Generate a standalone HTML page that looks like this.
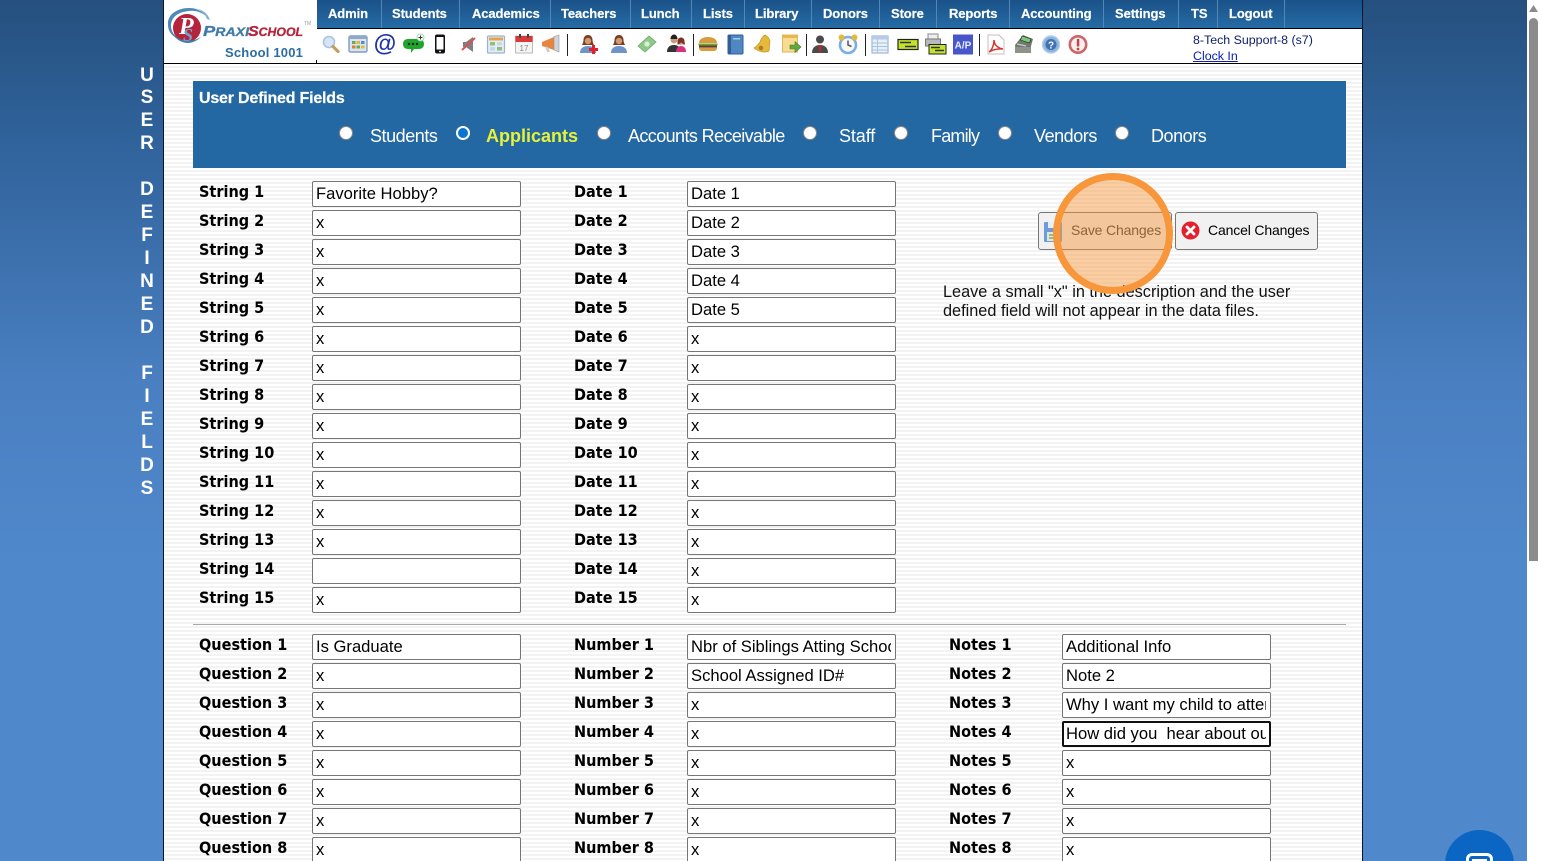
<!DOCTYPE html>
<html><head><meta charset="utf-8"><title>User Defined Fields</title>
<style>
*{box-sizing:border-box}
html,body{margin:0;padding:0;width:1541px;height:861px;overflow:hidden;background:#fff}
body{position:relative;font-family:"Liberation Sans",sans-serif}
#bg{position:absolute;left:0;top:0;width:1527px;height:861px;background:linear-gradient(180deg,#25507e 0,#2f6199 15%,#4a80c2 45%,#4f88cb 65%,#4f88cb 100%)}
#main{position:absolute;left:163px;top:0;width:1200px;height:861px;border-left:1px solid #0b1730;border-right:1px solid #0b1730;background:repeating-linear-gradient(180deg,#fff 0,#fff 2px,#f3f3f3 2px,#f3f3f3 4px)}
#head{position:absolute;left:164px;top:0;width:1198px;height:64px;background:#fff;border-bottom:1px solid #000}
#nav{position:absolute;left:317px;top:0;width:1045px;height:29px;background:linear-gradient(180deg,#1a5288,#266ba6);border-bottom:1px solid #000}
#nav a{position:absolute;top:6px;color:#fff;font-weight:bold;font-size:13px;line-height:15px;text-decoration:none;letter-spacing:-.1px;-webkit-text-stroke:.2px #fff}
#nav i{position:absolute;top:0;width:1px;height:28px;background:#5288b8}
.ic{position:absolute;top:32px;width:24px;height:24px}
.sp{position:absolute;top:34px;width:1px;height:22px;background:#222}
#side{position:absolute;left:134px;top:64.500px;width:26px;color:#fff;font-weight:bold;font-size:19px;line-height:22.980px;text-align:center}
#panel{position:absolute;left:193px;top:81px;width:1153px;height:87px;background:#2368a3}
#panel b{position:absolute;left:6px;top:9px;color:#fff;font-size:16px;line-height:18px;letter-spacing:-.2px;-webkit-text-stroke:.2px #fff}
.rd{position:absolute;top:126px;width:14px;height:14px;border-radius:50%;background:#fff;border:1px solid #888}
.rd.on{background:#0a75d0;border:2px solid #fff}
.rl{position:absolute;top:125.500px;color:#fff;font-size:18px;line-height:21px;letter-spacing:-.45px}
.rl.on{color:#e6f23a;font-weight:bold;letter-spacing:0}
.col{position:absolute}
.r{position:relative;height:29px;width:340px}
.r b{position:absolute;left:0;top:1px;font:bold 16px/19px "DejaVu Sans",sans-serif;color:#000;white-space:nowrap;transform:scaleX(.905);transform-origin:0 50%}
.r input{position:absolute;left:113px;top:0;width:209px;height:26px;border:1px solid #767676;border-radius:2px;background:#fff;padding:0 4px 0 3px;font:16.6px "Liberation Sans",sans-serif;color:#000;outline:none;margin:0}
.r input.f{border:2px solid #101010;padding:0 3px 0 2px}
.btn{position:absolute;top:212px;height:38px;background:#f1f1f1;border:1px solid #767676;border-radius:3px;font-size:14px;line-height:34px;letter-spacing:-.15px;color:#000}
#note{position:absolute;left:943px;top:283px;font-size:16.3px;line-height:19px;color:#111;white-space:nowrap}
#hr{position:absolute;left:193px;top:624px;width:1153px;height:1px;background:#a8a8a8}
#circle{position:absolute;left:1053px;top:173px;width:120px;height:121px;border-radius:50%;border:7px solid #f7963a;background:rgba(246,150,60,.48)}
#who{position:absolute;left:1193px;top:32px;font-size:12.400px;line-height:16px;color:#10206a;white-space:nowrap}
#who u{color:#0a20b0}
#track{position:absolute;left:1527px;top:0;width:14px;height:861px;background:#fff}
#thumb{position:absolute;left:1529px;top:18px;width:9px;height:543px;background:#8b8b8b;border-radius:5px 5px 0 0}
#chat{position:absolute;left:1445px;top:830px;width:69px;height:69px;border-radius:50%;background:#0a66c2}
#chat i{position:absolute;left:21px;top:23px;width:27px;height:22px;border:3px solid #fff;border-radius:6px}
#chat s{position:absolute;left:27px;top:29px;width:15px;height:2px;background:#fff}
</style></head><body>
<div id="bg"></div>
<div id="main"></div>
<div id="side">U<br>S<br>E<br>R<br>&nbsp;<br>D<br>E<br>F<br>I<br>N<br>E<br>D<br>&nbsp;<br>F<br>I<br>E<br>L<br>D<br>S</div>

<div id="head"></div>
<svg style="position:absolute;left:165px;top:3px" width="150" height="44" viewBox="0 0 150 44">
<path d="M3 22C2 11 13 5 24 5c8 0 13 3 17 8-5-4-11-6-17-5C13 9 6 14 6 23c0 6 4 10 8 13C8 34 3 29 3 22z" fill="#4c8bb8"/>
<path d="M33 6c5 1 10 5 12 11l-3-1c-2-5-5-8-9-10z" fill="#7fb0d0"/>
<circle cx="22" cy="25" r="14" fill="#b5243c"/>
<path d="M7 30c4 7 10 10 16 10 5 0 10-3 13-6-5 3-10 4-15 4-6-1-10-4-14-8z" fill="#3f7fb0"/>
<text x="14" y="31" font-family="Liberation Serif,serif" font-style="italic" font-weight="bold" font-size="24" fill="#fff">P</text>
<text x="18" y="38" font-family="Liberation Serif,serif" font-style="italic" font-weight="bold" font-size="18" fill="#6fa4cc">S</text>
<text x="38" y="33" font-family="Liberation Sans,sans-serif" font-style="italic" font-weight="bold" font-size="15" fill="#3f7cab" stroke="#3f7cab" stroke-width=".3" textLength="46" lengthAdjust="spacingAndGlyphs">P<tspan font-size="11.5">RAXI</tspan></text>
<text x="83" y="33" font-family="Liberation Sans,sans-serif" font-style="italic" font-weight="bold" font-size="15" fill="#b5243c" stroke="#b5243c" stroke-width=".3" textLength="55" lengthAdjust="spacingAndGlyphs">S<tspan font-size="11.5">CHOOL</tspan></text>
<text x="139" y="22" font-family="Liberation Sans,sans-serif" font-size="5" fill="#999">TM</text>
</svg>
<div style="position:absolute;left:225px;top:45px;font:bold 13px/15px 'Liberation Sans',sans-serif;letter-spacing:.2px;color:#2b6ea3;white-space:nowrap">School 1001</div>
<div style="position:absolute;left:316px;top:60px;width:1px;height:4px;background:#000"></div>

<div id="nav">
<a style="left:11px">Admin</a><i style="left:64px"></i>
<a style="left:75px">Students</a><i style="left:142px"></i>
<a style="left:155px">Academics</a><i style="left:233px"></i>
<a style="left:244px">Teachers</a><i style="left:313px"></i>
<a style="left:324px">Lunch</a><i style="left:374px"></i>
<a style="left:386px">Lists</a><i style="left:427px"></i>
<a style="left:438px">Library</a><i style="left:494px"></i>
<a style="left:506px">Donors</a><i style="left:562px"></i>
<a style="left:574px">Store</a><i style="left:619px"></i>
<a style="left:632px">Reports</a><i style="left:692px"></i>
<a style="left:704px">Accounting</a><i style="left:786px"></i>
<a style="left:798px">Settings</a><i style="left:861px"></i>
<a style="left:874px">TS</a><i style="left:900px"></i>
<a style="left:912px">Logout</a><i style="left:967px"></i>
</div>

<!-- toolbar icons -->
<svg class="ic" style="left:318px" viewBox="0 0 24 24"><circle cx="11" cy="10" r="5.500" fill="#d6e6f6" stroke="#a9c4de" stroke-width="1.600"/><path d="M15 14.500l5 5" stroke="#c69c5e" stroke-width="3.200" stroke-linecap="round"/></svg>
<svg class="ic" style="left:346px" viewBox="0 0 24 24"><rect x="3" y="4" width="18" height="16" rx="1.500" fill="#dbe5f0" stroke="#7f9cc0" stroke-width="1.400"/><rect x="3" y="4" width="18" height="3" fill="#8fa9c9"/><rect x="6" y="9" width="3.500" height="3" fill="#6fa84f"/><rect x="10.500" y="9" width="3.500" height="3" fill="#e2b93b"/><rect x="15" y="9" width="3.500" height="3" fill="#5b89c7"/><rect x="6" y="13.500" width="3.500" height="3" fill="#d9822b"/><rect x="10.500" y="13.500" width="3.500" height="3" fill="#6fa84f"/><rect x="15" y="13.500" width="3.500" height="3" fill="#e2b93b"/></svg>
<svg class="ic" style="left:373px" viewBox="0 0 24 24"><text x="12" y="19" text-anchor="middle" font-family="Liberation Sans,sans-serif" font-weight="bold" font-size="23" fill="#2233a8">@</text></svg>
<svg class="ic" style="left:402px" viewBox="0 0 24 24"><path d="M6 7h11c3 0 5 2 5 5s-2 5-5 5h-5l-3 4v-4H6c-3 0-5-2-5-5s2-5 5-5z" fill="#1fa52a"/><circle cx="7" cy="12" r="1.200" fill="#123"/><circle cx="11" cy="12" r="1.200" fill="#123"/><circle cx="15" cy="12" r="1.200" fill="#123"/><circle cx="18.500" cy="5.500" r="3.500" fill="#fff" stroke="#7d9" stroke-width=".8"/><path d="M18.500 3.500v4M16.500 5.500h4" stroke="#333" stroke-width="1"/></svg>
<svg class="ic" style="left:428px" viewBox="0 0 24 24"><rect x="7" y="2.500" width="10" height="19" rx="2" fill="#111"/><rect x="8.500" y="5" width="7" height="12.500" fill="#fff"/><circle cx="12" cy="19.500" r=".9" fill="#fff"/></svg>
<svg class="ic" style="left:457px" viewBox="0 0 24 24"><path d="M6 10h3l7-5v15l-7-5H6z" fill="#7d7f83"/><path d="M5 18L18 6" stroke="#d9534f" stroke-width="2"/></svg>
<svg class="ic" style="left:484px" viewBox="0 0 24 24"><rect x="3.500" y="4" width="17" height="17" rx="1" fill="#e4ecf5" stroke="#9cb3d0" stroke-width="1.200"/><rect x="5" y="5.500" width="14" height="3" fill="#e5a34b"/><rect x="6" y="10" width="5" height="3.500" fill="#8fbf78"/><rect x="13" y="10" width="5" height="3.500" fill="#c9d6e6"/><rect x="6" y="15" width="5" height="3.500" fill="#c9d6e6"/><rect x="13" y="15" width="5" height="3.500" fill="#8fbf78"/></svg>
<svg class="ic" style="left:512px" viewBox="0 0 24 24"><rect x="3.500" y="4" width="17" height="17" fill="#f4f4f4" stroke="#bbb"/><rect x="3.500" y="4" width="17" height="6" fill="#d83a3a"/><rect x="7" y="2" width="2" height="4" fill="#444"/><rect x="15" y="2" width="2" height="4" fill="#444"/><text x="12" y="19" text-anchor="middle" font-family="Liberation Sans,sans-serif" font-size="8" fill="#888">17</text></svg>
<svg class="ic" style="left:539px" viewBox="0 0 24 24"><path d="M3 10l12-5v13L3 14z" fill="#e8843c"/><path d="M15 4.500l5-1.500v17l-5-2z" fill="#cfd4da" stroke="#999" stroke-width=".6"/><path d="M6 14.500l2 5.500h3l-2-5z" fill="#c9cdd2"/></svg>
<div class="sp" style="left:567px"></div>
<svg class="ic" style="left:576px" viewBox="0 0 24 24"><path d="M12 3c3 0 4.500 2.500 4.500 5 0 2 1 4 1.500 5H6c.5-1 1.500-3 1.500-5 0-2.500 1.500-5 4.500-5z" fill="#7a3e22"/><circle cx="12" cy="9" r="3.200" fill="#d09a72"/><path d="M4 21c0-4.500 3-7 8-7s8 2.500 8 7z" fill="#6f94c8"/><path d="M17 15.500h3v3h3v3h-3v3h-3v-3h-3v-3h3z" transform="translate(-1 -2.500)" fill="#e0202a"/></svg>
<svg class="ic" style="left:607px" viewBox="0 0 24 24"><path d="M12 3c3 0 4.500 2.500 4.500 5 0 2 1 4 1.500 5H6c.5-1 1.500-3 1.500-5 0-2.500 1.500-5 4.500-5z" fill="#7a3e22"/><circle cx="12" cy="9" r="3.200" fill="#d09a72"/><path d="M4 21c0-4.500 3-7 8-7s8 2.500 8 7z" fill="#6f94c8"/></svg>
<svg class="ic" style="left:635px" viewBox="0 0 24 24"><path d="M3 14L14 4l7 6-11 10z" fill="#8fc98a" stroke="#6da868" stroke-width=".8"/><circle cx="12" cy="12" r="2.600" fill="#d9efd6"/></svg>
<svg class="ic" style="left:665px" viewBox="0 0 24 24"><circle cx="9" cy="8" r="3.400" fill="#c99b7a"/><path d="M5.500 7c0-3 2-4.500 3.500-4.500S12.500 4 12.500 7z" fill="#222"/><path d="M2 20c0-5 3-7 7-7s6 2 6 7z" fill="#333"/><circle cx="16" cy="10" r="3" fill="#d9a888"/><path d="M12.500 9.500c0-3 2-4 3.500-4s3.500 1 3.500 4l.5 3h-1.500l-2-2-3 2h-1z" fill="#7a3320"/><path d="M11 20c0-4 2-6 5-6s5 2 5 6z" fill="#d6307f"/></svg>
<div class="sp" style="left:693px"></div>
<svg class="ic" style="left:696px" viewBox="0 0 24 24"><path d="M3 11c0-4 4-6 9-6s9 2 9 6z" fill="#d79c3e"/><rect x="2.500" y="11.500" width="19" height="2" fill="#6da23c"/><rect x="3" y="13.500" width="18" height="2.200" fill="#6d3d1e"/><path d="M3 16h18c0 2-2 3-3 3H6c-1 0-3-1-3-3z" fill="#d79c3e"/></svg>
<svg class="ic" style="left:723px" viewBox="0 0 24 24"><rect x="5" y="3" width="15" height="19" rx="1" fill="#4f87c2" stroke="#2f5f96"/><rect x="5" y="3" width="3" height="19" fill="#2f5f96"/><rect x="10" y="6" width="7" height="1.500" fill="#a9c7e6"/></svg>
<svg class="ic" style="left:750px" viewBox="0 0 24 24"><path d="M15 3c2 1 4 3 5 6l-1 10c-4 2-10 1-15-3 2-1 4-3 6-6 1-3 3-6 5-7z" fill="#e5b93a" stroke="#c4952a" stroke-width=".7"/><circle cx="11" cy="16" r="2.200" fill="#a87b22"/></svg>
<svg class="ic" style="left:779px" viewBox="0 0 24 24"><rect x="3.500" y="3" width="15" height="17" fill="#f8dc92" stroke="#dcb860"/><rect x="3.500" y="3" width="15" height="3" fill="#e8b84c"/><path d="M11 13h5v-3.500l6 5.500-6 5.500V17h-5z" fill="#63a83f" stroke="#467c2b" stroke-width=".6"/></svg>
<div class="sp" style="left:806px"></div>
<svg class="ic" style="left:808px" viewBox="0 0 24 24"><circle cx="12" cy="7.500" r="4" fill="#4a4a4a"/><path d="M4 21c0-5 3-8 8-8s8 3 8 8z" fill="#4a4a4a"/><path d="M10.500 13h3l-1 8h-1z" fill="#c9252d"/></svg>
<svg class="ic" style="left:836px" viewBox="0 0 24 24"><circle cx="12" cy="13" r="8" fill="#f5f7fa" stroke="#79aee0" stroke-width="2.600"/><circle cx="5.500" cy="5.500" r="3" fill="#e5b93a"/><circle cx="18.500" cy="5.500" r="3" fill="#e5b93a"/><path d="M12 8.500V13l3.500 1.500" stroke="#555" stroke-width="1.500" fill="none"/></svg>
<div class="sp" style="left:865px"></div>
<svg class="ic" style="left:868px" viewBox="0 0 24 24"><rect x="4" y="4" width="16" height="17" fill="#e8f0f8" stroke="#9cb8d8" stroke-width="1.200"/><rect x="4" y="4" width="16" height="3.500" fill="#b6cce4"/><path d="M4 11h16M4 14.500h16M4 18h16M9.500 7.500V21" stroke="#a8c2de" stroke-width=".9"/></svg>
<svg class="ic" style="left:896px" viewBox="0 0 24 24"><rect x="2" y="7.500" width="20" height="10" fill="#c3e32a" stroke="#222" stroke-width="1.200"/><path d="M4 10.500h11M9 14.500h11" stroke="#333" stroke-width="1.600"/></svg>
<svg class="ic" style="left:923px" viewBox="0 0 24 24"><rect x="5" y="2" width="10" height="6" fill="#eee" stroke="#888"/><rect x="2.500" y="7" width="15" height="7" fill="#b5bac0" stroke="#777"/><rect x="6" y="12.500" width="17" height="9.500" fill="#c3e32a" stroke="#222"/><path d="M8 15.500h9M12 18.500h9" stroke="#333" stroke-width="1.400"/></svg>
<svg class="ic" style="left:951px" viewBox="0 0 24 24"><rect x="2" y="2.500" width="20" height="20" fill="#4757c9"/><text x="12" y="16.500" text-anchor="middle" font-family="Liberation Sans,sans-serif" font-weight="bold" font-size="10" fill="#e8ecff">A/P</text></svg>
<div class="sp" style="left:979px"></div>
<svg class="ic" style="left:984px" viewBox="0 0 24 24"><path d="M4 3h11l5 5v14H4z" fill="#fff" stroke="#c9bcbc"/><path d="M5 20c3-2 5-7 5-12 0 4 3 8 9 9-5-.5-10 .5-14 3z" fill="none" stroke="#d8362a" stroke-width="1.500"/></svg>
<svg class="ic" style="left:1012px" viewBox="0 0 24 24"><path d="M3 13l8-10 10 4-2 7v7H4z" fill="#6f7a6c"/><path d="M10 4l9 3-1.500 4-9-3z" fill="#7fc97a" stroke="#222" stroke-width=".6"/><path d="M3 15h16v6H3z" fill="#8d938a"/><path d="M5 12l9 2" stroke="#ccd" stroke-width="1.200"/></svg>
<svg class="ic" style="left:1039px" viewBox="0 0 24 24"><circle cx="12" cy="12.500" r="8.500" fill="#8db2dc" stroke="#b4cde8" stroke-width="1.400"/><circle cx="12" cy="12.500" r="5.500" fill="#3f72b5"/><text x="12" y="16.500" text-anchor="middle" font-family="Liberation Sans,sans-serif" font-weight="bold" font-size="10" fill="#fff">?</text></svg>
<svg class="ic" style="left:1066px" viewBox="0 0 24 24"><circle cx="12" cy="12.500" r="8.200" fill="#fbeeee" stroke="#c9676a" stroke-width="2.600"/><rect x="10.800" y="7" width="2.500" height="7.500" fill="#b9484c"/><circle cx="12" cy="17" r="1.400" fill="#b9484c"/></svg>

<div id="who">8-Tech Support-8 (s7)<br><u>Clock In</u></div>

<div id="panel"><b>User Defined Fields</b></div>
<span class="rd" style="left:339px"></span><span class="rl" style="left:370px">Students</span>
<span class="rd on" style="left:456px"></span><span class="rl on" style="left:486px">Applicants</span>
<span class="rd" style="left:597px"></span><span class="rl" style="left:628px;letter-spacing:-.6px">Accounts Receivable</span>
<span class="rd" style="left:803px"></span><span class="rl" style="left:839px;letter-spacing:-.1px">Staff</span>
<span class="rd" style="left:894px"></span><span class="rl" style="left:931px;letter-spacing:-.8px">Family</span>
<span class="rd" style="left:998px"></span><span class="rl" style="left:1034px">Vendors</span>
<span class="rd" style="left:1115px"></span><span class="rl" style="left:1151px">Donors</span>

<div class="col" style="left:199px;top:181px">
<div class="r"><b>String 1</b><input value="Favorite Hobby?"></div>
<div class="r"><b>String 2</b><input value="x"></div>
<div class="r"><b>String 3</b><input value="x"></div>
<div class="r"><b>String 4</b><input value="x"></div>
<div class="r"><b>String 5</b><input value="x"></div>
<div class="r"><b>String 6</b><input value="x"></div>
<div class="r"><b>String 7</b><input value="x"></div>
<div class="r"><b>String 8</b><input value="x"></div>
<div class="r"><b>String 9</b><input value="x"></div>
<div class="r"><b>String 10</b><input value="x"></div>
<div class="r"><b>String 11</b><input value="x"></div>
<div class="r"><b>String 12</b><input value="x"></div>
<div class="r"><b>String 13</b><input value="x"></div>
<div class="r"><b>String 14</b><input value=""></div>
<div class="r"><b>String 15</b><input value="x"></div>
</div>
<div class="col" style="left:574px;top:181px">
<div class="r"><b>Date 1</b><input value="Date 1"></div>
<div class="r"><b>Date 2</b><input value="Date 2"></div>
<div class="r"><b>Date 3</b><input value="Date 3"></div>
<div class="r"><b>Date 4</b><input value="Date 4"></div>
<div class="r"><b>Date 5</b><input value="Date 5"></div>
<div class="r"><b>Date 6</b><input value="x"></div>
<div class="r"><b>Date 7</b><input value="x"></div>
<div class="r"><b>Date 8</b><input value="x"></div>
<div class="r"><b>Date 9</b><input value="x"></div>
<div class="r"><b>Date 10</b><input value="x"></div>
<div class="r"><b>Date 11</b><input value="x"></div>
<div class="r"><b>Date 12</b><input value="x"></div>
<div class="r"><b>Date 13</b><input value="x"></div>
<div class="r"><b>Date 14</b><input value="x"></div>
<div class="r"><b>Date 15</b><input value="x"></div>
</div>

<div class="btn" style="left:1038px;width:134px;padding-left:32px;color:#333">Save Changes
<svg style="position:absolute;left:4px;top:8px" width="20" height="22" viewBox="0 0 20 22"><rect x="1" y="1" width="18" height="20" rx="1" fill="#6f9bd8"/><rect x="5" y="1" width="9" height="6" fill="#e8eef6"/><rect x="4" y="11" width="12" height="9" fill="#dfe8d8"/><path d="M6 14h8M6 17h8" stroke="#7db06a" stroke-width="1.400"/></svg></div>
<div class="btn" style="left:1175px;width:143px;padding-left:32px">Cancel Changes
<svg style="position:absolute;left:5px;top:8px" width="19" height="19" viewBox="0 0 19 19"><circle cx="9.500" cy="9.500" r="9" fill="#e2202e"/><path d="M6 6l7 7M13 6l-7 7" stroke="#fff" stroke-width="2.800" stroke-linecap="round"/></svg></div>

<div id="note">Leave a small "x" in the description and the user<br>defined field will not appear in the data files.</div>
<div id="circle"></div>

<div id="hr"></div>

<div class="col" style="left:199px;top:634px">
<div class="r"><b>Question 1</b><input value="Is Graduate"></div>
<div class="r"><b>Question 2</b><input value="x"></div>
<div class="r"><b>Question 3</b><input value="x"></div>
<div class="r"><b>Question 4</b><input value="x"></div>
<div class="r"><b>Question 5</b><input value="x"></div>
<div class="r"><b>Question 6</b><input value="x"></div>
<div class="r"><b>Question 7</b><input value="x"></div>
<div class="r"><b>Question 8</b><input value="x"></div>
</div>
<div class="col" style="left:574px;top:634px">
<div class="r"><b>Number 1</b><input value="Nbr of Siblings Atting School"></div>
<div class="r"><b>Number 2</b><input value="School Assigned ID#"></div>
<div class="r"><b>Number 3</b><input value="x"></div>
<div class="r"><b>Number 4</b><input value="x"></div>
<div class="r"><b>Number 5</b><input value="x"></div>
<div class="r"><b>Number 6</b><input value="x"></div>
<div class="r"><b>Number 7</b><input value="x"></div>
<div class="r"><b>Number 8</b><input value="x"></div>
</div>
<div class="col" style="left:949px;top:634px">
<div class="r"><b>Notes 1</b><input value="Additional Info"></div>
<div class="r"><b>Notes 2</b><input value="Note 2"></div>
<div class="r"><b>Notes 3</b><input value="Why I want my child to attend"></div>
<div class="r"><b>Notes 4</b><input class="f" value="How did you  hear about our school"></div>
<div class="r"><b>Notes 5</b><input value="x"></div>
<div class="r"><b>Notes 6</b><input value="x"></div>
<div class="r"><b>Notes 7</b><input value="x"></div>
<div class="r"><b>Notes 8</b><input value="x"></div>
</div>

<div id="chat"><i></i><s></s></div>

<div id="track"></div>
<svg style="position:absolute;left:1529px;top:4px" width="9" height="9" viewBox="0 0 9 9"><path d="M4.500 1L9 8H0z" fill="#8b8b8b"/></svg>
<div id="thumb"></div>
</body></html>
